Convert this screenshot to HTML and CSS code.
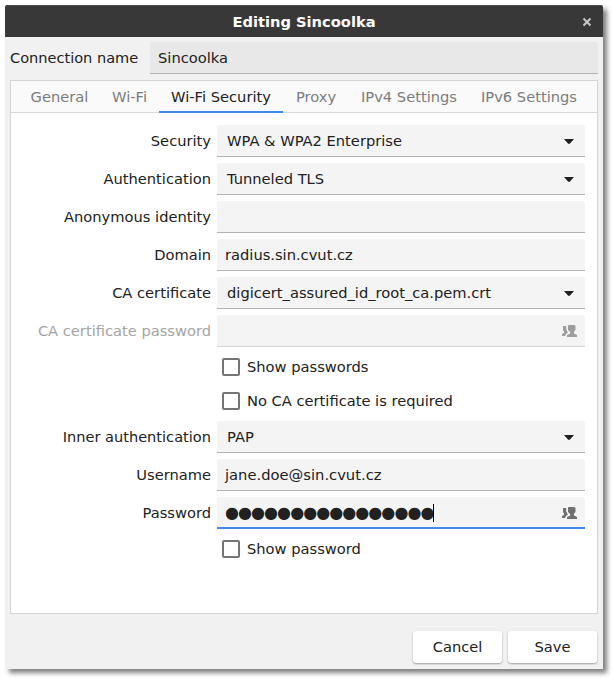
FILE: index.html
```html
<!DOCTYPE html>
<html lang="en">
<head>
<meta charset="utf-8">
<title>Editing Sincoolka</title>
<link rel="stylesheet" href="styles.css">
</head>
<body>
<svg class="defs" aria-hidden="true">
  <symbol id="people" viewBox="0 0 16 12">
    <path d="M2 1H5.2V4.5L6 5.2V6.4L7.2 7.2 5 9 4 11H1V9L3 8V6.5L2 5Z"/>
    <path d="M7.5 0H13.5L14.5 1V5L13 6.5V8.4L16 10V12H6V10L9.2 8.4V7L7 5V1Z"/>
  </symbol>
  <symbol id="arrow" viewBox="0 0 10 5"><path d="M0 0H10L6 4.5Q5 5.3 4 4.5Z"/></symbol>
</svg>
<main class="window">
  <header class="titlebar">
    <h1>Editing Sincoolka</h1>
    <svg class="close" viewBox="0 0 10 10"><path d="M1.5 1.5L8.5 8.5M8.5 1.5L1.5 8.5"/></svg>
  </header>
  <div class="connection">
    <span class="connection-label">Connection name</span>
    <div class="field name-field">Sincoolka</div>
  </div>
  <section class="notebook">
    <nav class="tabs">
      <span class="tab general">General</span>
      <span class="tab wifi">Wi-Fi</span>
      <span class="tab security active">Wi-Fi Security</span>
      <span class="tab proxy">Proxy</span>
      <span class="tab ip">IPv4 Settings</span>
      <span class="tab ip">IPv6 Settings</span>
    </nav>
    <div class="form">
      <div class="row"><span class="label">Security</span><div class="field combo">WPA &amp; WPA2 Enterprise<svg class="arrow"><use href="#arrow"/></svg></div></div>
      <div class="row"><span class="label">Authentication</span><div class="field combo">Tunneled TLS<svg class="arrow"><use href="#arrow"/></svg></div></div>
      <div class="row"><span class="label">Anonymous identity</span><div class="field"></div></div>
      <div class="row"><span class="label">Domain</span><div class="field">radius.sin.cvut.cz</div></div>
      <div class="row"><span class="label">CA certificate</span><div class="field combo">digicert_assured_id_root_ca.pem.crt<svg class="arrow"><use href="#arrow"/></svg></div></div>
      <div class="row disabled"><span class="label">CA certificate password</span><div class="field"><svg class="people"><use href="#people"/></svg></div></div>
      <div class="checks">
        <div class="check"><i class="box"></i>Show passwords</div>
        <div class="check"><i class="box"></i>No CA certificate is required</div>
      </div>
      <div class="row"><span class="label inner">Inner authentication</span><div class="field combo">PAP<svg class="arrow"><use href="#arrow"/></svg></div></div>
      <div class="row"><span class="label">Username</span><div class="field email">jane.doe@sin.cvut.cz</div></div>
      <div class="row"><span class="label">Password</span><div class="field focused"><span class="dots">●●●●●●●●●●●●●●●●</span><i class="caret"></i><svg class="people"><use href="#people"/></svg></div></div>
      <div class="check last"><i class="box"></i>Show password</div>
    </div>
  </section>
  <footer class="actions">
    <button class="button">Cancel</button>
    <button class="button">Save</button>
  </footer>
</main>
</body>
</html>
```
FILE: styles.css
```css
* { box-sizing: border-box; }
body {
  margin: 0;
  padding: 5px;
  height: 678px;
  overflow: hidden;
  background: #fff;
  color: #212121;
  font: 14.67px/20px "DejaVu Sans", sans-serif;
  white-space: nowrap;
}
.defs { display: none; }
.window {
  display: flex;
  flex-direction: column;
  width: 598px;
  height: 664px;
  background: #f1f1f1;
  border-radius: 2px 2px 0 0;
  box-shadow: 4px 4px 5px rgba(0, 0, 0, 0.5);
}
.titlebar {
  display: grid;
  grid-template-columns: 32px 1fr 32px;
  align-items: center;
  height: 32px;
  background: #383838;
  border-top: 1px solid #4b4b4b;
  border-radius: 2px 2px 0 0;
}
.titlebar h1 {
  grid-column: 2;
  margin: 0;
  color: #fff;
  font-size: 14.67px;
  line-height: 20px;
  text-align: center;
}
.close {
  width: 10px;
  height: 10px;
  margin-left: 11px;
  fill: none;
  stroke: #c8c8c8;
  stroke-width: 2;
}
.connection {
  display: flex;
  align-items: center;
  padding: 5px 5px 6px;
}
.connection-label { width: 140px; font-size: 14.55px; }
.field {
  display: flex;
  flex: 1;
  align-items: center;
  height: 32px;
  padding: 1px 8px 0;
  background: #f4f4f4;
  border-bottom: 1px solid #b3b3b3;
  border-radius: 3px 3px 0 0;
}
.name-field { background: #e8e8e8; }
.email { font-size: 14.72px; }
.notebook {
  height: 534px;
  margin: 0 5px;
  background: #fff;
  border: 1px solid #d4d5d5;
}
.tabs {
  display: flex;
  height: 32px;
  padding-left: 8px;
  background: #fafafa;
  border-bottom: 1px solid #d9d9d9;
}
.tab {
  height: 32px;
  padding-top: 6px;
  color: #7c7c7c;
  text-align: center;
}
.tab.active { color: #212121; border-bottom: 2px solid #4285f4; }
.general { width: 81px; }
.wifi { width: 59px; }
.security { width: 124px; }
.proxy { width: 66px; }
.ip { width: 120px; }
.form { padding: 12px 12px 0 0; }
.row {
  display: flex;
  align-items: center;
  gap: 6px;
  margin-bottom: 6px;
}
.label { width: 200px; text-align: right; }
.inner { font-size: 14.58px; }
.combo { padding: 1px 11px 0 10px; }
.arrow { width: 10px; height: 5px; margin-left: auto; fill: #212121; }
.people { width: 16px; height: 12px; margin-left: auto; fill: #707070; }
.disabled .label { color: #a4a4a4; }
.disabled .field { border-color: #d7d7d7; }
.disabled .people { fill: #9d9d9d; }
.checks { margin-bottom: 3px; }
.check {
  display: flex;
  align-items: center;
  gap: 7px;
  height: 34px;
  margin-left: 211px;
}
.checks .check:first-child { margin-top: -3px; }
.last { margin-top: -3px; }
.box {
  width: 18px;
  height: 18px;
  border: 2px solid #757575;
  border-radius: 2px;
}
.focused { border-bottom: 2px solid #4285f4; }
.dots { width: 208px; font-size: 16px; letter-spacing: -0.93px; }
.caret { width: 1px; height: 18px; background: #000; }
.actions {
  display: flex;
  gap: 6px;
  padding: 17px 6px 0 408px;
}
.button {
  width: 89px;
  height: 32px;
  padding: 0;
  background: #fff;
  color: #212121;
  border: 0;
  border-radius: 3px;
  box-shadow: 0 1px 2px rgba(0, 0, 0, 0.35);
  font: inherit;
}
```
